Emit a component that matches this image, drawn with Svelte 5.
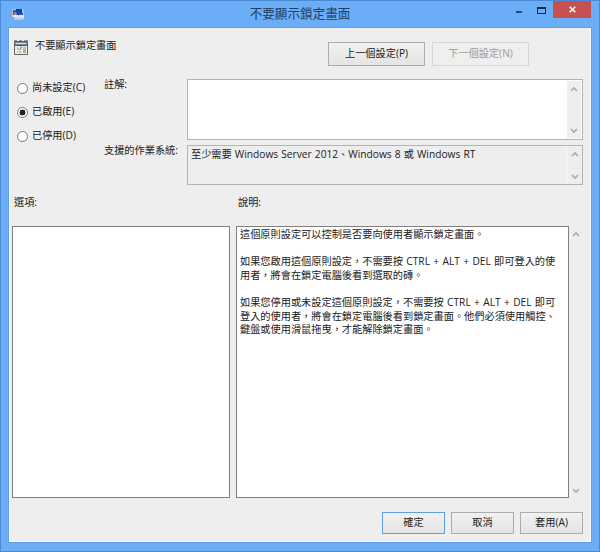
<script lang="ts">
  interface StateOption {
    id: string;
    label: string;
  }

  const title = '不要顯示鎖定畫面';

  const options: StateOption[] = [
    { id: 'none', label: '尚未設定(C)' },
    { id: 'enabled', label: '已啟用(E)' },
    { id: 'disabled', label: '已停用(D)' },
  ];

  const help = [
    '這個原則設定可以控制是否要向使用者顯示鎖定畫面。',
    '',
    '如果您啟用這個原則設定，不需要按 CTRL + ALT + DEL 即可登入的使',
    '用者，將會在鎖定電腦後看到選取的磚。',
    '',
    '如果您停用或未設定這個原則設定，不需要按 CTRL + ALT + DEL 即可',
    '登入的使用者，將會在鎖定電腦後看到鎖定畫面。他們必須使用觸控、',
    '鍵盤或使用滑鼠拖曳，才能解除鎖定畫面。',
  ];

  let selected = $state('enabled');
  let comment = $state('');
</script>

{#snippet scrollbar()}
  <div class="scrollbar" aria-hidden="true">
    <svg width="8" height="6" viewBox="0 0 8 6"><path d="M1 5 4 2 7 5" /></svg>
    <svg width="8" height="6" viewBox="0 0 8 6"><path d="M1 1 4 4 7 1" /></svg>
  </div>
{/snippet}

<div class="window" lang="zh-Hant">
  <header class="titlebar">
    <svg class="app-icon" width="13" height="12" viewBox="0 0 13 12">
      <path d="M0 1h12v11H2V9H0z" fill="#a3c4ea" />
      <path d="M4 1h6v6H4z" fill="#173fae" />
      <path d="M1 2h3v5H1z" fill="#5e5670" />
      <path d="M2 5 4 4l1 2-2 2z" fill="#c98f66" />
      <path d="M7 5h4v2H7z" fill="#2453c0" />
      <path d="M1 7h5v2H1z" fill="#f0eeea" />
      <path d="M7 7h5v3H6z" fill="#e1ecf8" />
      <path d="M3 9h7v2H3z" fill="#c5d5e5" />
    </svg>
    <h1>{title}</h1>
    <div class="controls">
      <button class="min" aria-label="最小化"><i></i></button>
      <button class="max" aria-label="最大化"><i></i></button>
      <button class="close" aria-label="關閉">
        <svg width="7" height="7" viewBox="0 0 7 7"><path d="M.7.7l5.6 5.6M6.3.7.7 6.3" /></svg>
      </button>
    </div>
  </header>

  <main class="client">
    <div class="heading">
      <svg width="14" height="15" viewBox="0 0 14 15">
        <path d="M.5 1.5h13v13H.5z" fill="#eeeee6" stroke="#66666c" />
        <path d="M1 2h12v3H1z" fill="#7b879a" />
        <path d="M0 1h3M5 1h3M10 1h4" stroke="#41434d" />
        <path d="M2 3.5h10" stroke="#d6dfe8" />
        <path d="M1 5.5h12" stroke="#55555c" />
        <path d="M3 8h1M6 7h1M9 8h3M5 12h2M3 12h1" stroke="#8f8a80" />
        <path d="M4 8.5 5.5 10 8 7" fill="none" stroke="#707b78" />
        <path d="M9 9h3v4H9z" fill="#b9ad96" />
      </svg>
      <h2>{title}</h2>
      <div class="nav">
        <button class="btn">上一個設定(P)</button>
        <button class="btn" disabled>下一個設定(N)</button>
      </div>
    </div>

    <div class="settings">
      <div class="states">
        {#each options as option (option.id)}
          <label>
            <input type="radio" name="state" value={option.id} bind:group={selected} />
            {option.label}
          </label>
        {/each}
      </div>
      <div class="fields">
        <label for="comment">註解:</label>
        <div class="field comment">
          <textarea id="comment" bind:value={comment}></textarea>
          {@render scrollbar()}
        </div>
        <span class="platform-label">支援的作業系統:</span>
        <div class="field platform">
          <p>至少需要 Windows Server 2012、Windows 8 或 Windows RT</p>
          {@render scrollbar()}
        </div>
      </div>
    </div>

    <div class="panels">
      <h3>選項:</h3>
      <h3>說明:</h3>
      <div class="panel"></div>
      <div class="help">
        <div class="panel">
          {#each help as line, i (i)}
            <p>{line}</p>
          {/each}
        </div>
        {@render scrollbar()}
      </div>
    </div>

    <footer>
      <button class="btn primary">確定</button>
      <button class="btn">取消</button>
      <button class="btn">套用(A)</button>
    </footer>
  </main>
</div>

<style>
  :global(body) {
    margin: 0;
  }
  * {
    box-sizing: border-box;
  }
  .window {
    display: flex;
    flex-direction: column;
    width: 600px;
    height: 552px;
    padding: 0 8px 9px;
    border: 1px solid #4a8bd3;
    background: #6badf6;
    color: #202020;
    font: 10.2px/13.6px 'Open Sans', 'Noto Sans CJK TC', sans-serif;
  }
  h1,
  h2,
  h3,
  p {
    margin: 0;
    font-size: inherit;
    font-weight: normal;
    white-space: pre;
  }
  button {
    padding: 0;
    border: 0;
    background: none;
    color: inherit;
    font: inherit;
  }
  .titlebar {
    display: grid;
    grid-template-columns: 100px 1fr 100px;
    height: 27px;
    flex: none;
  }
  .app-icon {
    margin: 7px 0 0 3px;
  }
  .titlebar h1 {
    padding-top: 4px;
    color: #213f62;
    font-size: 12.6px;
    line-height: 18px;
    text-align: center;
  }
  .controls {
    display: flex;
    justify-content: flex-end;
    height: 17px;
  }
  .controls button {
    display: flex;
    justify-content: center;
    align-items: center;
    width: 23px;
  }
  .controls .min i {
    width: 6px;
    height: 2px;
    margin-top: 5px;
    background: #244e7d;
  }
  .controls .max i {
    width: 9px;
    height: 7px;
    margin-top: 1px;
    border: 1px solid #162b44;
    border-top-width: 2px;
  }
  .controls .close {
    width: 38px;
    background: #c75050;
  }
  .close svg {
    fill: none;
    stroke: #fff;
    stroke-width: 1.5;
  }
  .client {
    display: flex;
    flex: 1;
    flex-direction: column;
    padding: 0 7px 7px 2px;
    border: 1px solid #fafafa;
    border-top: 0;
    background: #eee;
    box-shadow: 0 0 0 1px #5f9fe8;
  }
  .heading {
    display: flex;
    height: 51px;
    padding-left: 2px;
  }
  .heading > svg {
    margin-top: 12px;
  }
  .heading h2 {
    margin: 11px 0 0 7px;
  }
  .nav {
    display: flex;
    gap: 7px;
    margin: 14px 54px 0 auto;
  }
  .btn {
    width: 63px;
    height: 22px;
    border: 1px solid #acacac;
    background: linear-gradient(#f1f1f1, #e4e4e4);
    text-align: center;
  }
  .nav .btn {
    width: 97px;
    height: 24px;
  }
  .btn:disabled {
    border-color: #d5d5d5;
    background: #efefef;
    color: #9b9b9b;
  }
  .btn.primary {
    border-color: #5c9fe6;
  }
  .settings {
    display: flex;
    height: 106px;
  }
  .states {
    display: flex;
    flex-direction: column;
    width: 92px;
    margin-top: -3px;
  }
  .states label {
    display: flex;
    align-items: center;
    gap: 4px;
    height: 24px;
    padding-left: 5px;
    white-space: nowrap;
  }
  .states input {
    appearance: none;
    width: 11px;
    height: 11px;
    margin: 0;
    border: 1px solid #777;
    border-radius: 50%;
    background: #fff;
  }
  .states input:checked {
    background: radial-gradient(#222 0 2.8px, #fff 3.2px);
  }
  .fields {
    display: grid;
    flex: 1;
    grid-template-columns: 83px 1fr;
    grid-template-rows: 61px 40px;
    row-gap: 5px;
    white-space: nowrap;
  }
  .fields > label,
  .platform-label {
    margin-top: -1px;
  }
  .field {
    display: flex;
    border: 1px solid #b3b3b3;
  }
  .comment {
    background: #fff;
  }
  .comment textarea {
    flex: 1;
    min-width: 0;
    padding: 2px 3px;
    border: 0;
    outline: 0;
    background: none;
    font: inherit;
    resize: none;
  }
  .platform p {
    flex: 1;
    padding: 2px 3px;
    word-spacing: 0.45px;
  }
  .scrollbar {
    display: flex;
    flex: none;
    flex-direction: column;
    justify-content: space-between;
    align-items: center;
    width: 15px;
    padding: 5px 0 4px;
    background: #eee;
  }
  .comment .scrollbar {
    border: 1px solid #fff;
    border-left: 0;
  }
  .platform .scrollbar {
    width: 16px;
    border-left: 1px solid #f8f8f8;
  }
  .scrollbar path {
    fill: none;
    stroke: #aaa;
    stroke-width: 1.6;
  }
  .panels {
    display: grid;
    grid-template-columns: 218px 1fr;
    grid-template-rows: 30px 272px;
    column-gap: 6px;
    margin-top: 11px;
  }
  .panels h3 {
    padding-left: 2px;
  }
  .panel {
    border: 1px solid #808080;
    background: #fff;
  }
  .help {
    display: flex;
  }
  .help .panel {
    flex: 1;
    padding: 1px 3px;
    word-spacing: 0.7px;
  }
  .help p {
    height: 13.65px;
  }
  .help .scrollbar {
    width: 14px;
  }
  footer {
    display: flex;
    justify-content: flex-end;
    gap: 6px;
    margin-top: auto;
  }
</style>
